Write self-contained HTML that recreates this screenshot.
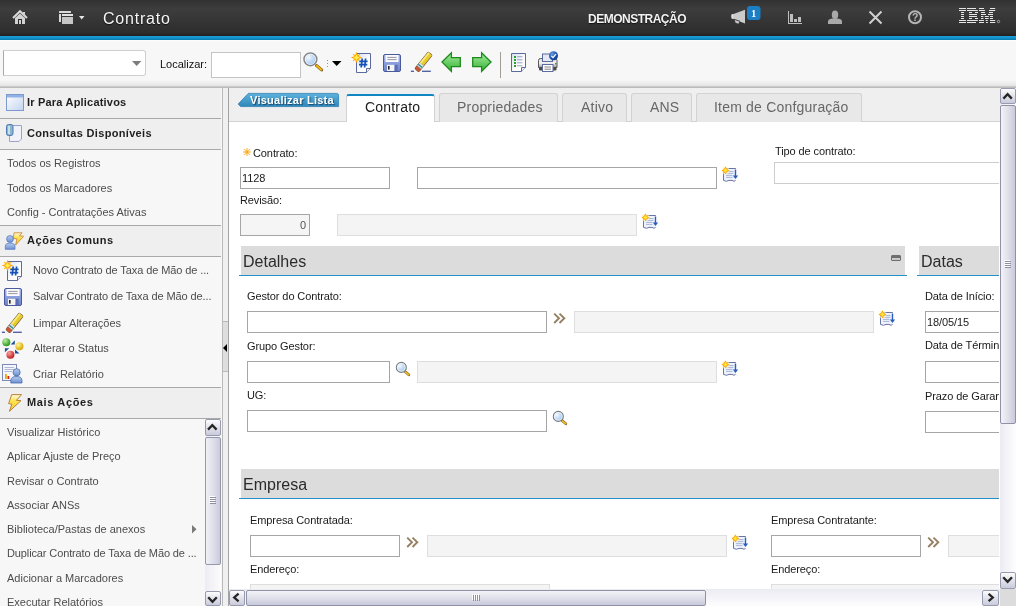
<!DOCTYPE html>
<html><head><meta charset="utf-8">
<style>
*{box-sizing:border-box;margin:0;padding:0}
html,body{width:1016px;height:607px;overflow:hidden;background:#fff;font-family:"Liberation Sans",sans-serif;position:relative}
.a{position:absolute}
.t{position:absolute;white-space:nowrap;line-height:13px;font-size:11px;color:#000}
.inp{position:absolute;background:#fff;border:1px solid #a6a6a6}
.ro{position:absolute;background:#f4f4f4;border:1px solid #dedede}
.lbl{position:absolute;white-space:nowrap;font-size:11px;line-height:13px;color:#1a1a1a;letter-spacing:-0.1px}
.lp-h{position:absolute;left:0;width:221px;height:31px;background:#efefef;border-top:1px solid #a9a9a9}
.lp-h span{position:absolute;left:27px;top:9px;font-weight:bold;font-size:11px;line-height:13px;color:#1e1e1e;letter-spacing:0.2px;white-space:nowrap}
.li{position:absolute;left:7px;font-size:11px;line-height:13px;color:#4d4d4d;white-space:nowrap}
.li2{position:absolute;left:33px;font-size:11px;line-height:13px;color:#4d4d4d;white-space:nowrap}
.tab{position:absolute;top:93px;height:29px;background:#e8e8e8;border:1px solid #d2d2d2;border-bottom:none;border-radius:3px 3px 0 0}
.tl{position:absolute;top:99px;font-size:14px;line-height:16px;color:#676767;letter-spacing:0.2px;white-space:nowrap}
.sec{position:absolute;height:30px;background:#dcdcdc}
.secl{position:absolute;height:1px;background:#2191c8}
.st{position:absolute;font-size:16px;line-height:18px;color:#2b2b2b;white-space:nowrap}
svg{position:absolute;left:0;top:0}
.t,.lbl,.li,.li2,.lp-h span,.tl,.st{will-change:transform}
</style></head><body>

<!-- header -->
<div class="a" style="left:0;top:0;width:1016px;height:36px;background:linear-gradient(#313131 0,#3d3d3d 9px,#2d2d2d 33px,#241d1d 36px)"></div>
<div class="a" style="left:0;top:36px;width:1016px;height:4px;background:linear-gradient(#1c9fd9,#1392cb 50%,#0a78ab)"></div>
<div class="t" style="left:103px;top:10px;font-size:16px;line-height:18px;color:#f6f6f6;letter-spacing:0.8px;text-shadow:0 1px 1px #111">Contrato</div>
<div class="t" style="left:588px;top:12px;font-size:12px;line-height:14px;color:#f2f2f2;font-weight:bold;letter-spacing:-0.5px;text-shadow:0 1px 1px #111">DEMONSTRAÇÃO</div>

<!-- toolbar -->
<div class="a" style="left:0;top:40px;width:1016px;height:48px;background:linear-gradient(#fdfdfd 0,#f7f7f7 2px,#f7f7f7 40px,#e4e4e4 46px,#cbcbcb 46px);border-bottom:1px solid #bcbcbc"></div>
<div class="inp" style="left:3px;top:50px;width:143px;height:26px;border-color:#cfcfcf;border-left-color:#a8a8a8;border-radius:0 3px 3px 0"></div>

<div class="t" style="left:160px;top:58px;color:#111">Localizar:</div>
<div class="inp" style="left:211px;top:52px;width:90px;height:26px;border-color:#c4c4c4"></div>
<div class="a" style="left:500px;top:52px;width:1px;height:26px;background:#a39d94"></div>

<!-- left panel -->
<div class="a" style="left:0;top:88px;width:223px;height:518px;background:#f7f7f7;border-right:1px solid #b9b9b9"></div>
<div class="a" style="left:223px;top:88px;width:5px;height:518px;background:#f0f0f0"></div>
<div class="a" style="left:223px;top:321px;width:5px;height:51px;background:#dedede;border-top:1px solid #b9b9b9;border-bottom:1px solid #b9b9b9"></div>
<div class="a" style="left:223px;top:344px;width:0;height:0;border-top:4px solid transparent;border-bottom:4px solid transparent;border-right:4px solid #000"></div>
<div class="lp-h" style="top:88px;border-top:none;height:30px"><span style="top:8px">Ir Para Aplicativos</span></div>
<div class="lp-h" style="top:118px"><span style="top:8px;letter-spacing:0.33px">Consultas Disponíveis</span></div>
<div class="a" style="left:0;top:149px;width:221px;height:1px;background:#a9a9a9"></div>
<div class="li" style="top:157px">Todos os Registros</div>
<div class="li" style="top:182px">Todos os Marcadores</div>
<div class="li" style="top:206px">Config - Contratações Ativas</div>
<div class="lp-h" style="top:225px"><span style="top:8px;letter-spacing:0.55px">Ações Comuns</span></div>
<div class="a" style="left:0;top:256px;width:221px;height:1px;background:#a9a9a9"></div>
<div class="li2" style="top:264px;letter-spacing:-0.1px">Novo Contrato de Taxa de Mão de ...</div>
<div class="li2" style="top:290px;letter-spacing:-0.1px">Salvar Contrato de Taxa de Mão de...</div>
<div class="li2" style="top:317px">Limpar Alterações</div>
<div class="li2" style="top:342px">Alterar o Status</div>
<div class="li2" style="top:368px">Criar Relatório</div>
<div class="lp-h" style="top:387px"><span style="top:8px;letter-spacing:0.65px">Mais Ações</span></div>
<div class="a" style="left:0;top:418px;width:221px;height:1px;background:#a9a9a9"></div>
<div class="li" style="top:426px">Visualizar Histórico</div>
<div class="li" style="top:450px">Aplicar Ajuste de Preço</div>
<div class="li" style="top:475px">Revisar o Contrato</div>
<div class="li" style="top:499px">Associar ANSs</div>
<div class="li" style="top:523px">Biblioteca/Pastas de anexos</div>
<div class="li" style="top:547px;letter-spacing:-0.12px">Duplicar Contrato de Taxa de Mão de ...</div>
<div class="li" style="top:572px">Adicionar a Marcadores</div>
<div class="li" style="top:596px">Executar Relatórios</div>
<!-- left scrollbar -->
<div class="a" style="left:205px;top:419px;width:16px;height:187px;background:linear-gradient(90deg,#ececf3,#fcfcfd)"></div>
<div class="a" style="left:205px;top:437px;width:16px;height:128px;border:1px solid #9597ab;border-radius:2px;background:linear-gradient(90deg,#f0f0f5,#dcdce8 60%,#c9cbdb)"></div>
<div class="a" style="left:205px;top:419px;width:16px;height:17px;border:1px solid #989bb0;border-radius:2px;background:linear-gradient(#fdfdfe,#e6e7ef 40%,#c9cbda)"></div>
<div class="a" style="left:205px;top:591px;width:16px;height:15px;border:1px solid #989bb0;border-radius:2px;background:linear-gradient(#fdfdfe,#e6e7ef 40%,#c9cbda)"></div>
<!-- content -->
<div class="a" style="left:228px;top:88px;width:772px;height:518px;background:#fff;border-left:1px solid #a3a3a3"></div>
<div class="a" style="left:229px;top:88px;width:771px;height:34px;background:#efefef;border-bottom:1px solid #d2d2d2"></div>
<svg style="position:absolute;left:0;top:0" width="400" height="130"><defs><linearGradient id="gVL" x1="0" y1="0" x2="0" y2="1"><stop offset="0" stop-color="#5eb2dc"/><stop offset="1" stop-color="#2f86b9"/></linearGradient></defs>
<path d="M248.3 93.4 H336.6 Q338.6 93.4 338.6 95.4 V106.6 H240.6 L238.2 104 Z" fill="url(#gVL)" stroke="#2f80b4" stroke-width="0.8"/></svg>
<div class="t" style="left:250px;top:94px;font-weight:bold;color:#fff;letter-spacing:0.25px;text-shadow:1px 1px 1px #1a4a6a">Visualizar Lista</div>
<div class="tab" style="left:346px;top:94px;width:89px;height:28px;background:#fff;border-top:2px solid #1087c5"></div>
<div class="tl" style="left:365px;color:#222">Contrato</div>
<div class="tab" style="left:439px;width:119px"></div><div class="tl" style="left:457px">Propriedades</div>
<div class="tab" style="left:562px;width:65px"></div><div class="tl" style="left:581px">Ativo</div>
<div class="tab" style="left:631px;width:61px"></div><div class="tl" style="left:650px">ANS</div>
<div class="tab" style="left:696px;width:166px"></div><div class="tl" style="left:714px">Item de Confguração</div>

<div class="lbl" style="left:253px;top:147px">Contrato:</div>
<div class="inp" style="left:240px;top:167px;width:150px;height:22px"></div>
<div class="lbl" style="left:242px;top:172px">1128</div>
<div class="inp" style="left:417px;top:167px;width:300px;height:22px"></div>
<div class="lbl" style="left:775px;top:145px">Tipo de contrato:</div>
<div class="inp" style="left:774px;top:162px;width:240px;height:22px;border-color:#cdcdcd"></div>
<div class="lbl" style="left:240px;top:194px">Revisão:</div>
<div class="inp" style="left:240px;top:214px;width:70px;height:22px;background:#f5f5f5"></div>
<div class="lbl" style="left:299.5px;top:219px;color:#555">0</div>
<div class="ro" style="left:337px;top:214px;width:300px;height:22px"></div>

<div class="sec" style="left:241px;top:246px;width:664px"></div><div class="secl" style="left:239px;top:275px;width:668px"></div>
<div class="st" style="left:243px;top:253px">Detalhes</div>
<div class="sec" style="left:919px;top:246px;width:81px"></div><div class="secl" style="left:917px;top:275px;width:83px"></div>
<div class="st" style="left:921px;top:253px">Datas</div>
<div class="a" style="left:891px;top:255px;width:10px;height:6px;border:1px solid #6e6e6e;border-radius:1px;background:linear-gradient(#6e6e6e 0,#6e6e6e 2px,#c8c8c8 2px)"></div>

<div class="lbl" style="left:247px;top:290px">Gestor do Contrato:</div>
<div class="inp" style="left:247px;top:311px;width:300px;height:22px"></div>
<div class="ro" style="left:574px;top:311px;width:300px;height:22px"></div>
<div class="lbl" style="left:247px;top:340px">Grupo Gestor:</div>
<div class="inp" style="left:247px;top:361px;width:143px;height:22px"></div>
<div class="ro" style="left:417px;top:361px;width:300px;height:22px"></div>
<div class="lbl" style="left:247px;top:389px">UG:</div>
<div class="inp" style="left:247px;top:410px;width:300px;height:22px"></div>

<div class="lbl" style="left:925px;top:290px">Data de Início:</div>
<div class="inp" style="left:925px;top:311px;width:100px;height:22px"></div>
<div class="lbl" style="left:927px;top:316px">18/05/15</div>
<div class="lbl" style="left:925px;top:339px">Data de Término:</div>
<div class="inp" style="left:925px;top:361px;width:100px;height:22px"></div>
<div class="lbl" style="left:925px;top:390px">Prazo de Garantia:</div>
<div class="inp" style="left:925px;top:411px;width:100px;height:22px"></div>

<div class="sec" style="left:241px;top:469px;width:759px;height:29px"></div><div class="secl" style="left:239px;top:498px;width:761px"></div>
<div class="st" style="left:243px;top:476px">Empresa</div>
<div class="lbl" style="left:250px;top:514px">Empresa Contratada:</div>
<div class="inp" style="left:250px;top:535px;width:150px;height:22px"></div>
<div class="ro" style="left:427px;top:535px;width:300px;height:22px"></div>
<div class="lbl" style="left:250px;top:563px">Endereço:</div>
<div class="ro" style="left:250px;top:584px;width:300px;height:22px"></div>
<div class="lbl" style="left:771px;top:514px">Empresa Contratante:</div>
<div class="inp" style="left:771px;top:535px;width:150px;height:22px"></div>
<div class="ro" style="left:948px;top:535px;width:100px;height:22px"></div>
<div class="lbl" style="left:771px;top:563px">Endereço:</div>
<div class="ro" style="left:771px;top:584px;width:300px;height:22px"></div>

<div class="a" style="left:999px;top:122px;width:1px;height:467px;background:#fff"></div>
<!-- v scrollbar -->
<div class="a" style="left:1000px;top:88px;width:16px;height:501px;background:linear-gradient(90deg,#ebebf3,#fdfdfe)"></div>
<div class="a" style="left:1000px;top:105px;width:16px;height:319px;border:1px solid #8f91a6;border-radius:2px;background:linear-gradient(90deg,#f2f2f7,#e0e0ea 50%,#c8cadb)"></div>
<div class="a" style="left:1000px;top:88px;width:16px;height:16px;border:1px solid #989bb0;border-radius:2px;background:linear-gradient(#fdfdfe,#e6e7ef 40%,#c9cbda)"></div>
<div class="a" style="left:1000px;top:572px;width:16px;height:17px;border:1px solid #989bb0;border-radius:2px;background:linear-gradient(#fdfdfe,#e6e7ef 40%,#c9cbda)"></div>
<!-- h scrollbar -->
<div class="a" style="left:229px;top:589px;width:771px;height:17px;background:linear-gradient(#ebebf3,#fdfdfe)"></div>
<div class="a" style="left:246px;top:590px;width:460px;height:16px;border:1px solid #8f91a6;border-radius:2px;background:linear-gradient(#f2f2f7,#e0e0ea 50%,#c8cadb)"></div>
<div class="a" style="left:229px;top:590px;width:16px;height:16px;border:1px solid #989bb0;border-radius:2px;background:linear-gradient(#fdfdfe,#e6e7ef 40%,#c9cbda)"></div>
<div class="a" style="left:982px;top:590px;width:17px;height:16px;border:1px solid #989bb0;border-radius:2px;background:linear-gradient(#fdfdfe,#e6e7ef 40%,#c9cbda)"></div>
<div class="a" style="left:1000px;top:589px;width:16px;height:17px;background:#dcdcdc"></div>
<div class="a" style="left:0;top:606px;width:1016px;height:1px;background:#fff"></div>
<svg width="1016" height="607" viewBox="0 0 1016 607">
<defs>
 <linearGradient id="gPage" x1="0" y1="0" x2="1" y2="1"><stop offset="0" stop-color="#d5ddf0"/><stop offset="0.6" stop-color="#ffffff"/></linearGradient>
 <linearGradient id="gSave" x1="0" y1="0" x2="0" y2="1"><stop offset="0" stop-color="#a6b6ea"/><stop offset="1" stop-color="#6f84cc"/></linearGradient>
 <linearGradient id="gGreen" x1="0" y1="0" x2="0" y2="1"><stop offset="0" stop-color="#a8eca0"/><stop offset="1" stop-color="#34b034"/></linearGradient>
 <radialGradient id="gLens" cx="0.35" cy="0.35" r="0.7"><stop offset="0" stop-color="#f4f9ff"/><stop offset="0.5" stop-color="#c5dcf5"/><stop offset="1" stop-color="#9ec3ec"/></radialGradient>
 <linearGradient id="gWin" x1="0" y1="0" x2="1" y2="1"><stop offset="0" stop-color="#ffffff"/><stop offset="1" stop-color="#c3d4ef"/></linearGradient>
 <radialGradient id="gBallG" cx="0.35" cy="0.3" r="0.7"><stop offset="0" stop-color="#b8f0a0"/><stop offset="1" stop-color="#2a9a20"/></radialGradient>
 <radialGradient id="gBallY" cx="0.35" cy="0.3" r="0.7"><stop offset="0" stop-color="#fff6a0"/><stop offset="1" stop-color="#d8a800"/></radialGradient>
 <radialGradient id="gBallR" cx="0.35" cy="0.3" r="0.7"><stop offset="0" stop-color="#ffa0a0"/><stop offset="1" stop-color="#c02020"/></radialGradient>
 <linearGradient id="gBolt" x1="0" y1="0" x2="0" y2="1"><stop offset="0" stop-color="#fffbe0"/><stop offset="0.4" stop-color="#fde24a"/><stop offset="1" stop-color="#f4cc30"/></linearGradient>
 <linearGradient id="gPerson" x1="0" y1="0" x2="0" y2="1"><stop offset="0" stop-color="#b6cdf0"/><stop offset="1" stop-color="#6d90d0"/></linearGradient>
 <g id="star">
  <path d="M0 -5.8 L1.6 -1.6 L5.8 0 L1.6 1.6 L0 5.8 L-1.6 1.6 L-5.8 0 L-1.6 -1.6 Z" fill="#ffa200"/>
  <path d="M-3.3 -3.3 L3.3 3.3 M3.3 -3.3 L-3.3 3.3" stroke="#ffb400" stroke-width="1.1"/>
  <path d="M0 -3.2 L1 -1 L3.2 0 L1 1 L0 3.2 L-1 1 L-3.2 0 L-1 -1 Z" fill="#fff04a"/>
 </g>
 <g id="newdoc">
  <path d="M6.5 1.5 H20.5 V16.5 L16.5 20.5 H6.5 Z" fill="url(#gPage)" stroke="#5b6b9e" stroke-width="1"/>
  <path d="M16.5 20.5 V16.5 H20.5" fill="#eef0f6" stroke="#5b6b9e" stroke-width="1"/>
  <path d="M12.2 6.5 L11.2 15.5 M15.6 6.5 L14.6 15.5 M9.3 9.3 H17.6 M9.0 12.6 H17.3" stroke="#1452b4" stroke-width="1.7" fill="none"/>
  <use href="#star" x="6.5" y="5.5"/>
 </g>
 <g id="save">
  <rect x="0.5" y="0.5" width="17" height="17" rx="1.5" fill="url(#gSave)" stroke="#4a5a9c"/>
  <rect x="2.5" y="1" width="13" height="7" fill="#fbfbfd"/>
  <path d="M4.3 3.4 H13.6 M4.3 5.6 H13.6" stroke="#8a8a98" stroke-width="0.9"/>
  <rect x="4" y="10.8" width="7.2" height="6.2" fill="#f4f4f4"/>
  <rect x="5" y="12" width="1.6" height="3.6" fill="#222"/>
  <rect x="12" y="10.8" width="2.6" height="6.2" fill="#5b6cb0"/>
 </g>
 <g id="eraser">
  <g transform="translate(13.5 9.9) rotate(-51)">
   <rect x="-11.2" y="-3.1" width="22.4" height="6.2" rx="1.8" fill="#7a5a38"/>
   <rect x="-2.8" y="-2.4" width="13.4" height="4.8" fill="#e8cc2c"/>
   <rect x="-2.8" y="-2.4" width="13.4" height="1.8" fill="#f8ea7c"/>
   <rect x="-7" y="-2.6" width="4.2" height="5.2" fill="#dce8ec"/>
   <rect x="-5.9" y="-2.6" width="1.4" height="5.2" fill="#2a8a8a"/>
   <rect x="-10.9" y="-2.7" width="3.9" height="5.4" rx="1.8" fill="#c4583a"/>
  </g>
  <rect x="0.9" y="18.6" width="3.1" height="1.4" fill="#5563a6"/>
  <rect x="12" y="18.6" width="8.8" height="1.4" fill="#5563a6"/>
 </g>
 <g id="arrowL">
  <path d="M1 10 L10.4 0.8 V5.6 H19.3 V14.6 H10.4 V19.4 Z" fill="url(#gGreen)" stroke="#1e8a1e" stroke-width="1.3" stroke-linejoin="miter"/>
 </g>
 <g id="mag">
  <path d="M16.6 17.6 L21.6 21.9" stroke="#7a5a28" stroke-width="3.2" stroke-linecap="round"/>
  <path d="M16.8 17.8 L21.4 21.7" stroke="#f5b800" stroke-width="1.9" stroke-linecap="round"/>
  <circle cx="10.4" cy="11.3" r="6.4" fill="url(#gLens)" stroke="#858585" stroke-width="1.5"/>
  <circle cx="10.4" cy="11.3" r="5.2" fill="none" stroke="#ffffff" stroke-width="0.9" opacity="0.7"/>
 </g>
 <g id="magS">
  <path d="M17.3 16.8 L20.8 19.8" stroke="#8a6a30" stroke-width="2.8" stroke-linecap="round"/>
  <path d="M17.5 17 L20.6 19.6" stroke="#f2c020" stroke-width="1.6" stroke-linecap="round"/>
  <circle cx="13.3" cy="12.4" r="5" fill="url(#gLens)" stroke="#7a7a7a" stroke-width="1.1"/>
  <circle cx="13.3" cy="12.4" r="4" fill="none" stroke="#ffffff" stroke-width="0.8" opacity="0.8"/>
 </g>
 <g id="detail">
  <path d="M7.5 8.5 H19.5 V20 L18 21.3 L16 20.4 H13 L10.5 21.3 L7.5 20.4 Z" fill="#eef2fa"/>
  <path d="M7.5 10.5 V20.4 L10.5 21.3 L13 20.4 H16 L18 21.3 L19.6 20.4 M10.5 8.5 H19.8" stroke="#6c74a6" stroke-width="1" fill="none"/>
  <path d="M10 11.5 H17.5 M10 13.4 H17.5 M10 15.4 H16.5 M10 17.4 H16.5" stroke="#a2aed6" stroke-width="0.9"/>
  <path d="M19.5 9.5 V17.5" stroke="#2a5cc0" stroke-width="1.4"/>
  <path d="M16.9 15.6 L19.5 18.9 L22.1 15.6 Z" fill="#2a5cc0"/>
  <g transform="translate(9.4 10.4)"><circle r="4" fill="#fff6c8" opacity="0.6"/><path d="M0 -3.8 L1.5 -1.5 L3.8 0 L1.5 1.5 L0 3.8 L-1.5 1.5 L-3.8 0 L-1.5 -1.5 Z" fill="#ff9e00"/><path d="M0 -2.3 L1 -1 L2.3 0 L1 1 L0 2.3 L-1 1 L-2.3 0 L-1 -1 Z" fill="#ffe830"/></g>
 </g>
 <g id="chev">
  <path d="M9.2 8.6 L14 13.3 L9.2 18 M14.5 8.6 L19.3 13.3 L14.5 18" stroke="#968064" stroke-width="1.9" fill="none"/>
 </g>
 <g id="uparr"><path d="M4.5 10 L8 6.5 L11.5 10" stroke="#2a2a2a" stroke-width="2" fill="none"/></g>
</defs>

<!-- header icons -->
<g fill="#d2d2d2">
 <path d="M13 18 L20 11.2 L27 18" stroke="#d8d8d8" stroke-width="2" fill="none"/>
 <rect x="23" y="12" width="2" height="4"/>
 <path d="M15 18 L20 13.6 L25 18 V24 H15 Z"/>
 <rect x="18" y="19" width="4" height="5" fill="#2b2b2b"/>
 <rect x="19" y="20" width="2" height="4"/>
</g>
<g fill="#dadada">
 <rect x="59" y="11" width="12" height="2" rx="0.5"/>
 <rect x="59" y="14" width="2" height="8"/>
 <rect x="62" y="14" width="11" height="2" fill="#e2e2e2"/>
 <rect x="62" y="17" width="11" height="7" fill="#c6c6c6"/>
 <path d="M79 16 H84.5 L81.7 19.5 Z" fill="#e6e6e6"/>
</g>
<g>
 <path d="M731.5 14.8 L745 9.8 V23.5 L731.5 18.2 Z" fill="#cbcbcb"/>
 <path d="M731.5 14.5 L733.2 14 V18.8 L731.5 18.3 Z" fill="#e0e0e0"/>
 <path d="M734.5 19.6 L739.6 21.4 L738.4 23.8 L735.6 22.8 Z" fill="#c6c6c6"/>
 <path d="M734 19.2 L740 21.3" stroke="#222" stroke-width="0.7"/>
 <rect x="747" y="6" width="13.5" height="14" rx="3" fill="#1c7ec5"/>
 <text x="753.6" y="17" font-family="Liberation Serif" font-weight="bold" font-size="10.5" fill="#fff" text-anchor="middle">1</text>
</g>
<g fill="#bebebe">
 <rect x="788" y="11" width="1" height="13"/>
 <rect x="788" y="23" width="14" height="1"/>
 <rect x="790" y="14" width="3" height="8"/>
 <rect x="794" y="19" width="3" height="3"/>
 <rect x="798" y="17" width="3" height="5"/>
</g>
<g fill="#a9a9a9">
 <ellipse cx="835" cy="14.8" rx="3.2" ry="4.3"/>
 <path d="M828 24 V21.5 Q828 19.3 832 18.6 L838 18.6 Q842 19.3 842 21.5 V24 Z"/>
</g>
<path d="M869.5 11.5 L881.5 23.5 M881.5 11.5 L869.5 23.5" stroke="#d0d0d0" stroke-width="2"/>
<g>
 <circle cx="915" cy="17.2" r="6" stroke="#b4b4b4" stroke-width="2" fill="none"/>
 <text x="915.2" y="21.2" font-family="Liberation Sans" font-weight="bold" font-size="10.5" fill="#b8b8b8" text-anchor="middle">?</text>
</g>
<g fill="#e6e6e6">
 <rect x="959" y="8" width="7" height="1"/><rect x="967" y="8" width="9" height="1"/><rect x="979" y="8" width="5" height="1"/><rect x="990" y="8" width="5.2" height="1"/>
 <rect x="959" y="10" width="7" height="1"/><rect x="967" y="10" width="10.8" height="1"/><rect x="979" y="10" width="6" height="1"/><rect x="989" y="10" width="6.2" height="1"/>
 <rect x="961" y="12" width="3" height="1"/><rect x="969" y="12" width="3" height="1"/><rect x="975" y="12" width="3" height="1"/><rect x="981" y="12" width="4" height="1"/><rect x="989" y="12" width="4" height="1"/>
 <rect x="961" y="14" width="3" height="1"/><rect x="969" y="14" width="8" height="1"/><rect x="981" y="14" width="5" height="1"/><rect x="988" y="14" width="5" height="1"/>
 <rect x="961" y="16" width="3" height="1"/><rect x="969" y="16" width="8" height="1"/><rect x="981" y="16" width="2.4" height="1"/><rect x="984.8" y="16" width="4" height="1"/><rect x="990" y="16" width="3" height="1"/>
 <rect x="961" y="18" width="3" height="1"/><rect x="969" y="18" width="3" height="1"/><rect x="975" y="18" width="3" height="1"/><rect x="981" y="18" width="2.4" height="1"/><rect x="985" y="18" width="3.7" height="1"/><rect x="990" y="18" width="3" height="1"/>
 <rect x="959" y="20" width="7" height="1"/><rect x="967" y="20" width="10.8" height="1"/><rect x="979" y="20" width="5" height="1"/><rect x="985.7" y="20" width="2" height="1"/><rect x="990" y="20" width="5.2" height="1"/>
 <rect x="959" y="22" width="7" height="1"/><rect x="967" y="22" width="9" height="1"/><rect x="979" y="22" width="5" height="1"/><rect x="986" y="22" width="1.8" height="1"/><rect x="990" y="22" width="5.2" height="1"/>
 <circle cx="998.5" cy="21.5" r="1.2" fill="none" stroke="#c8c8c8" stroke-width="0.7"/>
</g>

<!-- toolbar icons -->
<path d="M132 61 H141.4 L136.7 66 Z" fill="#7d7d7d"/>
<use href="#mag" x="300" y="48"/>
<g fill="#8e8eb0"><rect x="327" y="60" width="1" height="1"/><rect x="327" y="63" width="1" height="1"/><rect x="327" y="66" width="1" height="1"/></g>
<path d="M332 61 H341.5 L336.7 66 Z" fill="#000"/>
<use href="#newdoc" x="350" y="52"/>
<use href="#save" x="383" y="54"/>
<use href="#eraser" x="410" y="52"/>
<use href="#arrowL" x="441" y="52"/>
<use href="#arrowL" transform="translate(492 52) scale(-1 1)"/>
<g>
 <path d="M511.5 53.5 H525.5 V67.5 L521.5 71.5 H511.5 Z" fill="url(#gPage)" stroke="#5b6b9e"/>
 <path d="M521.5 71.5 V67.5 H525.5" fill="#eef0f6" stroke="#5b6b9e"/>
 <g fill="#2aa02a"><rect x="514" y="56" width="2" height="2"/><rect x="514" y="59" width="2" height="2"/><rect x="514" y="62" width="2" height="2"/><rect x="514" y="65" width="2" height="2"/></g>
 <path d="M517 56.8 H522.5 M517 59.8 H522.5 M517 62.8 H522.5 M517 65.8 H522.5" stroke="#8b92b8" stroke-width="0.9"/>
</g>
<g>
 <defs><radialGradient id="gChk" cx="0.35" cy="0.3" r="0.75"><stop offset="0" stop-color="#6a9ae0"/><stop offset="0.6" stop-color="#1f55b0"/><stop offset="1" stop-color="#0a3a8a"/></radialGradient></defs>
 <defs><linearGradient id="gPr" x1="0" y1="0" x2="0" y2="1"><stop offset="0" stop-color="#d8d8d8"/><stop offset="0.5" stop-color="#f4f4f4"/><stop offset="1" stop-color="#9a9a9a"/></linearGradient></defs>
 <path d="M538.5 60.5 Q538.5 58.5 540.5 58.5 H555 Q557 58.5 557 60.5 V67.5 H538.5 Z" fill="url(#gPr)" stroke="#585858"/>
 <rect x="542.5" y="54" width="10" height="7.5" fill="#e4e8f4" stroke="#5b6b9e"/>
 <rect x="539" y="67" width="17.5" height="3.5" rx="1" fill="#4a4a4a"/>
 <rect x="555" y="63" width="1.4" height="1.4" fill="#2aa02a"/>
 <rect x="542.5" y="64.5" width="10.5" height="7" fill="#ffffff" stroke="#5b6b9e"/>
 <path d="M544.5 67 H551 M544.5 69.2 H551" stroke="#777" stroke-width="0.9"/>
 <circle cx="553.5" cy="55.8" r="4.5" fill="url(#gChk)"/>
 <path d="M551.3 55.8 L553 57.6 L556 54.2" stroke="#fff" stroke-width="1.2" fill="none"/>
</g>

<!-- left panel icons -->
<g>
 <rect x="6.5" y="94.5" width="17" height="16" fill="url(#gWin)" stroke="#7d9ad0"/>
 <rect x="7" y="95" width="16" height="2.5" fill="#93b2e4"/>
</g>
<g>
 <path d="M9.5 125.5 H21.5 V139 L19 141.5 H9.5 Z" fill="#f0f2fa" stroke="#9aa2c8"/>
 <rect x="6.5" y="124.5" width="6.5" height="11" rx="2" fill="#8fb4cc" stroke="#4a7ab0"/>
 <rect x="8" y="126" width="2" height="8" fill="#c8e0ec"/>
</g>
<g>
 <path d="M14.1 232.8 L22.1 232.8 L19.4 235.8 L23.6 236.3 L15.6 245 L17 239 L13.2 238.3 Z" fill="url(#gBolt)" stroke="#c98a3a" stroke-width="0.9" stroke-linejoin="round"/>
 <circle cx="10" cy="239" r="3.4" fill="url(#gPerson)" stroke="#5a7ac0" stroke-width="0.8"/>
 <path d="M5.3 249.3 V246.5 Q5.3 243 10 243 Q15 243 15 246.5 V249.3 Z" fill="url(#gPerson)" stroke="#5a7ac0" stroke-width="0.8"/>
</g>
<use href="#newdoc" x="1" y="260"/>
<use href="#save" x="4" y="288"/>
<use href="#eraser" x="1" y="313"/>
<g>
 <circle cx="6.3" cy="342.3" r="4" fill="url(#gBallG)"/>
 <circle cx="19.4" cy="346.3" r="4" fill="url(#gBallY)"/>
 <circle cx="10.4" cy="354.7" r="4" fill="url(#gBallR)"/>
 <path d="M10.7 344.4 L14.8 340.3 L14.8 344.4 Z M4.9 348.2 L9.2 348.2 L4.9 352.3 Z M15 349.5 L19.5 353.6 L15 353.6 Z" fill="#1d4f98"/>
</g>
<g>
 <rect x="2.5" y="364.5" width="14" height="16" fill="#f4f6fb" stroke="#7d8ab8"/>
 <path d="M4.5 367.5 H14 M4.5 369.5 H14 M4.5 371.5 H12" stroke="#a0a8c8" stroke-width="0.8"/>
 <rect x="5" y="374" width="1.8" height="5" fill="#e8a800"/><rect x="7.5" y="376" width="1.8" height="3" fill="#d02020"/>
 <circle cx="16.6" cy="372.3" r="3.6" fill="url(#gPerson)" stroke="#4a6ab0" stroke-width="0.8"/>
 <path d="M10.8 383 V380.5 Q10.8 376.5 16.5 376.5 Q22 376.5 22 380.5 V383 Z" fill="url(#gPerson)" stroke="#4a6ab0" stroke-width="0.8"/>
</g>
<path d="M11.7 394.6 L21.6 394.6 L16.4 400.4 L21 400.6 L9.4 411.4 L11.9 404.2 L8.6 403.6 Z" fill="url(#gBolt)" stroke="#b98038" stroke-width="1" stroke-linejoin="round"/>
<path d="M192 525 L196.5 529.2 L192 533.4 Z" fill="#7a7a7a"/>

<!-- content icons -->
<use href="#detail" x="716" y="160"/>
<use href="#detail" x="636" y="207"/>
<use href="#chev" x="545" y="305"/>
<use href="#detail" x="873" y="304"/>
<use href="#magS" x="388" y="355"/>
<use href="#detail" x="716" y="354"/>
<use href="#magS" x="545" y="404"/>
<use href="#chev" x="398" y="529"/>
<use href="#detail" x="726" y="528"/>
<use href="#chev" x="919" y="529"/>

<!-- scrollbar arrows / grips -->
<g stroke="#262626" stroke-width="2.3" fill="none" stroke-linejoin="miter">
<path d="M1003.4 98.6 L1007.6 94.2 L1011.8 98.6"/>
<path d="M208 429.6 L212.3 425.2 L216.6 429.6"/>
<path d="M1003.2 577.2 L1007.6 581.8 L1012 577.2"/>
<path d="M208.2 597.2 L212.5 601.8 L216.8 597.2"/>
<path d="M238.6 593.6 L234.2 597.5 L238.6 601.4"/>
<path d="M988.6 593.8 L992.8 597.5 L988.6 601.2"/>
</g>
<g fill="#ffffff"><rect x="1004" y="260" width="6" height="1"/><rect x="1004" y="262" width="6" height="1"/><rect x="1004" y="264" width="6" height="1"/><rect x="1004" y="266" width="6" height="1"/>
<rect x="209" y="496" width="6" height="1"/><rect x="209" y="498" width="6" height="1"/><rect x="209" y="500" width="6" height="1"/><rect x="209" y="502" width="6" height="1"/>
<rect x="472" y="594" width="1" height="6"/><rect x="474" y="594" width="1" height="6"/><rect x="476" y="594" width="1" height="6"/><rect x="478" y="594" width="1" height="6"/></g>
<g fill="#8d8fa3"><rect x="1005" y="261" width="6" height="1"/><rect x="1005" y="263" width="6" height="1"/><rect x="1005" y="265" width="6" height="1"/><rect x="1005" y="267" width="6" height="1"/>
<rect x="210" y="497" width="6" height="1"/><rect x="210" y="499" width="6" height="1"/><rect x="210" y="501" width="6" height="1"/><rect x="210" y="503" width="6" height="1"/>
<rect x="473" y="595" width="1" height="6"/><rect x="475" y="595" width="1" height="6"/><rect x="477" y="595" width="1" height="6"/><rect x="479" y="595" width="1" height="6"/></g>
<!-- asterisk -->
<g>
 <rect x="243" y="151" width="8" height="2" fill="#fcd592"/>
 <rect x="246" y="148" width="2" height="8" fill="#fcd592"/>
 <rect x="245" y="150" width="4" height="4" fill="#fcc563"/>
 <rect x="246" y="151" width="2" height="2" fill="#f8aa22"/>
 <g fill="#fbc35e"><circle cx="244.5" cy="149.5" r="0.8"/><circle cx="249.5" cy="149.5" r="0.8"/><circle cx="244.5" cy="154.5" r="0.8"/><circle cx="249.5" cy="154.5" r="0.8"/></g>
</g>
</svg>
</body></html>
